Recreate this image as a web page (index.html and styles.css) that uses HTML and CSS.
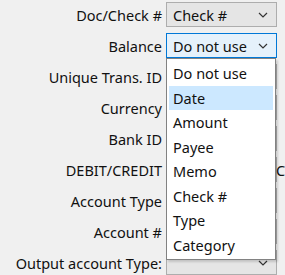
FILE: index.html
```html
<!DOCTYPE html>
<html lang="en">
<head>
  <meta charset="UTF-8" />
  <title>Column mapping</title>
  <link rel="stylesheet" href="styles.css">
</head>
<body>

<div class="mapping">
  <div class="row">
    <span class="label">Doc/Check #</span>
    <div class="combo"><span>Check #</span><svg class="chev" viewBox="0 0 10 6"><path d="M1 1 L5 5 L9 1"/></svg></div>
  </div>
  <div class="row">
    <span class="label">Balance</span>
    <div class="combo active"><span>Do not use</span><svg class="chev" viewBox="0 0 10 6"><path d="M1 1 L5 5 L9 1"/></svg></div>
  </div>
  <div class="row">
    <span class="label">Unique Trans. ID</span>
    <div class="combo"></div>
  </div>
  <div class="row">
    <span class="label">Currency</span>
    <div class="combo"></div>
  </div>
  <div class="row">
    <span class="label">Bank ID</span>
    <div class="combo"></div>
  </div>
  <div class="row">
    <span class="label">DEBIT/CREDIT</span>
    <div class="combo"></div>
    <span class="extra">C</span>
  </div>
  <div class="row">
    <span class="label">Account Type</span>
    <div class="combo"></div>
  </div>
  <div class="row">
    <span class="label">Account #</span>
    <div class="combo"></div>
  </div>
  <div class="row">
    <span class="label">Output account Type:</span>
    <div class="combo"><span></span><svg class="chev" viewBox="0 0 10 6"><path d="M1 1 L5 5 L9 1"/></svg></div>
  </div>

  <ul class="dropdown">
    <li>Do not use</li>
    <li class="hover">Date</li>
    <li>Amount</li>
    <li>Payee</li>
    <li>Memo</li>
    <li>Check #</li>
    <li>Type</li>
    <li>Category</li>
  </ul>
</div>

</body>
</html>
```

FILE: styles.css
```css
body {
  margin: 0;
  background: #f0f0f0;
  font-family: 'Noto Sans', 'Open Sans', sans-serif;
  font-size: 14.5px;
  color: #111;
  overflow: hidden;
}

.mapping {
  position: relative;
  padding-top: 2px;
  display: flex;
  flex-direction: column;
  gap: 6px;
}

.row {
  display: grid;
  grid-template-columns: 162px 110px auto;
  column-gap: 5px;
  align-items: center;
  height: 25px;
}

.label {
  text-align: right;
  white-space: nowrap;
}

.combo {
  height: 25px;
  box-sizing: border-box;
  border: 1px solid #adadad;
  background: #e5e5e5;
  display: flex;
  align-items: center;
  justify-content: space-between;
  padding: 0 8px 0 6px;
  margin-left: -1px;
}

.combo.active {
  border-color: #0078d7;
  background: #e5f1fb;
}

.chev {
  width: 10px;
  height: 6px;
  fill: none;
  stroke: #333;
  stroke-width: 1.2;
}

.extra {
  white-space: nowrap;
  margin-left: -6px;
}

.dropdown {
  position: absolute;
  top: 58px;
  left: 166px;
  width: 110px;
  box-sizing: border-box;
  margin: 0;
  padding: 2px 2px;
  list-style: none;
  background: #fff;
  border: 1px solid #828282;
  box-shadow: 2px 2px 2px rgba(0, 0, 0, 0.15);
}

.dropdown li {
  height: 24.5px;
  line-height: 24.5px;
  padding-left: 4px;
}

.dropdown li.hover {
  background: #cce8ff;
}
```
